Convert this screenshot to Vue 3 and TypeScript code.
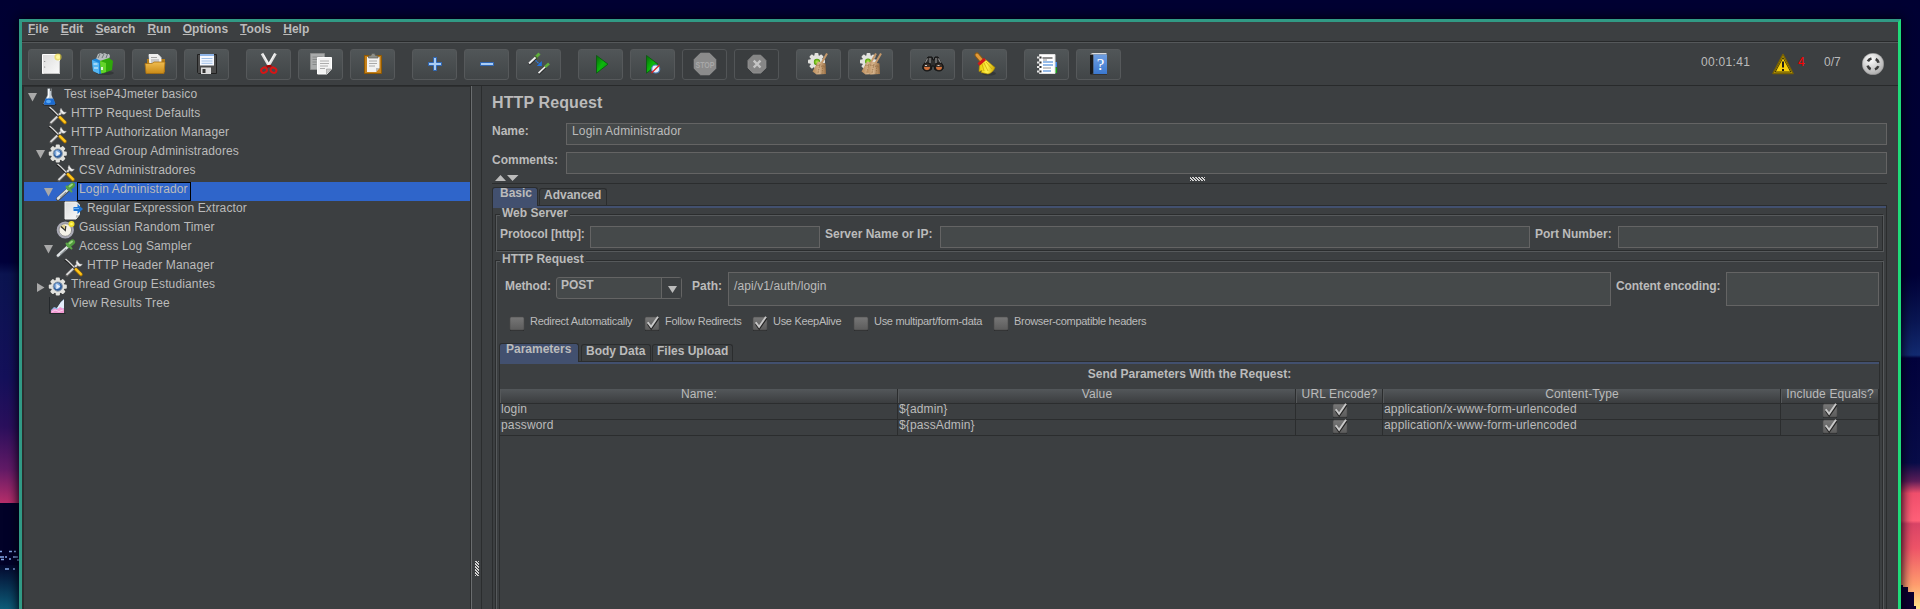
<script setup lang="ts">
interface ToolButton { icon: string; gap?: boolean; disabled?: boolean }
interface TreeNode { label: string; depth: number; icon: string; state?: 'open' | 'closed'; selected?: boolean }
interface Param { name: string; value: string; type: string }

const menus: string[] = ['File', 'Edit', 'Search', 'Run', 'Options', 'Tools', 'Help']

const tools: ToolButton[] = [
  { icon: 'new' }, { icon: 'templates' }, { icon: 'open' }, { icon: 'save' },
  { icon: 'cut', gap: true }, { icon: 'copy' }, { icon: 'paste' },
  { icon: 'plus', gap: true }, { icon: 'minus' }, { icon: 'toggle' },
  { icon: 'play', gap: true }, { icon: 'play-now' }, { icon: 'stop', disabled: true }, { icon: 'shutdown', disabled: true },
  { icon: 'clear', gap: true }, { icon: 'clear-all' },
  { icon: 'search', gap: true }, { icon: 'broom' },
  { icon: 'functions', gap: true }, { icon: 'help' },
]

const tree: TreeNode[] = [
  { label: 'Test iseP4Jmeter basico', depth: 0, icon: 't-flask', state: 'open' },
  { label: 'HTTP Request Defaults', depth: 1, icon: 't-tools' },
  { label: 'HTTP Authorization Manager', depth: 1, icon: 't-tools' },
  { label: 'Thread Group Administradores', depth: 1, icon: 't-gear', state: 'open' },
  { label: 'CSV Administradores', depth: 2, icon: 't-tools' },
  { label: 'Login Administrador', depth: 2, icon: 't-pipette', state: 'open', selected: true },
  { label: 'Regular Expression Extractor', depth: 3, icon: 't-extract' },
  { label: 'Gaussian Random Timer', depth: 2, icon: 't-timer' },
  { label: 'Access Log Sampler', depth: 2, icon: 't-pipette', state: 'open' },
  { label: 'HTTP Header Manager', depth: 3, icon: 't-tools' },
  { label: 'Thread Group Estudiantes', depth: 1, icon: 't-gear', state: 'closed' },
  { label: 'View Results Tree', depth: 1, icon: 't-chart' },
]

const options = [
  { label: 'Redirect Automatically', on: false, cls: 'o1' },
  { label: 'Follow Redirects', on: true, cls: 'o2' },
  { label: 'Use KeepAlive', on: true, cls: 'o3' },
  { label: 'Use multipart/form-data', on: false, cls: 'o4' },
  { label: 'Browser-compatible headers', on: false, cls: 'o5' },
]

const params: Param[] = [
  { name: 'login', value: '${admin}', type: 'application/x-www-form-urlencoded' },
  { name: 'password', value: '${passAdmin}', type: 'application/x-www-form-urlencoded' },
]
</script>

<template>
  <svg class="defs" width="0" height="0" aria-hidden="true">
    <defs>
      <linearGradient id="gPaper" x1="0" y1="0" x2="1" y2="1"><stop offset="0" stop-color="#dcdcdc" /><stop offset="1" stop-color="#fafafa" /></linearGradient>
      <linearGradient id="gFolder" x1="0" y1="0" x2="0" y2="1"><stop offset="0" stop-color="#f0bd50" /><stop offset="1" stop-color="#c98a17" /></linearGradient>
      <linearGradient id="gPlay" x1="0" y1="0" x2="1" y2="1"><stop offset="0" stop-color="#0a6a0a" /><stop offset="0.5" stop-color="#0cb80c" /><stop offset="1" stop-color="#0a8a0a" /></linearGradient>
      <linearGradient id="gBristle" x1="0" y1="0" x2="1" y2="0"><stop offset="0" stop-color="#b98a58" /><stop offset="0.5" stop-color="#d6b48c" /><stop offset="1" stop-color="#9a6f43" /></linearGradient>
      <linearGradient id="gYellow" x1="0" y1="0" x2="1" y2="0"><stop offset="0" stop-color="#e8c800" /><stop offset="0.5" stop-color="#fff04a" /><stop offset="1" stop-color="#c9a400" /></linearGradient>
      <radialGradient id="gBall" cx="0.4" cy="0.3" r="0.8"><stop offset="0" stop-color="#ffffff" /><stop offset="1" stop-color="#a2a2a2" /></radialGradient>
      <radialGradient id="gGreen"><stop offset="0" stop-color="#b6ee4c" /><stop offset="1" stop-color="#4e9a06" /></radialGradient>
      <linearGradient id="gBook" x1="0" y1="0" x2="0" y2="1"><stop offset="0" stop-color="#6f9fe2" /><stop offset="1" stop-color="#3b78cf" /></linearGradient>
      <linearGradient id="gBox" x1="0" y1="0" x2="0" y2="1"><stop offset="0" stop-color="#777" /><stop offset="1" stop-color="#5c5c5c" /></linearGradient>
      <g id="cog">
        <g fill="#e2e2de">
          <rect x="-2" y="-8.5" width="4" height="17" rx="1" /><rect x="-8.5" y="-2" width="17" height="4" rx="1" />
          <rect x="-2" y="-8.5" width="4" height="17" rx="1" transform="rotate(45)" /><rect x="-2" y="-8.5" width="4" height="17" rx="1" transform="rotate(-45)" />
          <circle r="6.5" />
        </g>
      </g>
      <g id="strawbroom">
        <path d="M31 4.5 25 15" stroke="#c4986a" stroke-width="2" />
        <path d="M22 12.5 29.5 14.5 30 25 20.5 25.5 16.5 22.5Z" fill="url(#gBristle)" />
        <path d="M20 16 29 18M24 15 22 24M27 16 26 25" stroke="#8d653b" stroke-width=".7" stroke-dasharray="1.5 1" />
      </g>
    </defs>

    <symbol id="new" viewBox="0 0 45 31">
      <path d="M14.5 5.5h17v19h-17z" fill="url(#gPaper)" stroke="#fff" />
      <path d="M15.5 24.5h16M31.5 12v12" stroke="#aaa" stroke-width=".7" />
      <circle cx="16.7" cy="12.5" r=".6" fill="#777" /><circle cx="16.7" cy="18" r=".6" fill="#777" />
      <circle cx="30" cy="8" r="3.6" fill="#e9d63a" opacity=".65" /><circle cx="30" cy="8" r="2" fill="#fff9a0" />
    </symbol>
    <symbol id="templates" viewBox="0 0 45 31">
      <ellipse cx="25" cy="24" rx="9" ry="2" fill="#2b2e2f" opacity=".6" />
      <path d="M16 10 18 5l3-1 1 1 3-1 1 1 3 0 1 2-2 6-6 3z" fill="#b7bcbe" />
      <path d="M18 9l2-4M22 9l2-4M26 9l1.500-4" stroke="#6f7678" stroke-width="1" />
      <path d="M12 11l4-1.500 7 3.500v10.500l-3 1.500-7-3z" fill="#1d86d8" />
      <path d="M12 11l7 3v11l-6-3z" fill="#54b6f2" /><path d="M13.500 15h4M14 19h4" stroke="#e8f6ff" stroke-width="1.200" />
      <path d="M20 12l9-3 4 3-1 9-9 3.500-2-1z" fill="#2fa80a" />
      <path d="M20 12l6 2v9l-5 1.500z" fill="#63d52a" /><path d="M22 18v3" stroke="#fff" stroke-width="1.600" />
    </symbol>
    <symbol id="open" viewBox="0 0 45 31">
      <path d="M15 10h18v13H15z" fill="#b17b19" />
      <path d="M17 5.500h9l3 3V17H18z" fill="#eee" stroke="#fff" stroke-width=".8" />
      <path d="M19 8.500h6M19 11h8M19 13h8" stroke="#9a9a9a" stroke-width=".9" />
      <path d="M13 14.500h7l2-1.500h11L32 24.500H14z" fill="url(#gFolder)" stroke="#a87012" stroke-width=".8" />
    </symbol>
    <symbol id="save" viewBox="0 0 45 31">
      <path d="M13.500 5.500h19v19h-18l-1-1z" fill="#4b4b4b" stroke="#202020" />
      <path d="M16 5h14v11.500H16z" fill="#f5f8ff" /><path d="M16 5h14v2H16z" fill="#8fb5e8" />
      <path d="M17.500 9.500h11M17.500 12h11M17.500 14.300h11" stroke="#9fbfe6" />
      <path d="M17 18.500h10V25H17z" fill="#dcdcdc" /><path d="M18.500 20h3v4h-3z" fill="#333" />
    </symbol>
    <symbol id="cut" viewBox="0 0 45 31">
      <path d="M16 4.500l7.500 13M29.500 4.500l-7.500 13" stroke="#dedede" stroke-width="2.800" />
      <path d="M17 5l7 12.500M28.500 5l-6 10.500" stroke="#f8f8f8" stroke-width="1" />
      <path d="M20.500 17.500l5-.5" stroke="#a40000" stroke-width="2.500" />
      <ellipse cx="18" cy="21.200" rx="3" ry="2.500" transform="rotate(-30 18 21.200)" fill="none" stroke="#d81515" stroke-width="2" />
      <ellipse cx="27.500" cy="21.200" rx="3" ry="2.500" transform="rotate(30 27.500 21.200)" fill="none" stroke="#d81515" stroke-width="2" />
    </symbol>
    <symbol id="copy" viewBox="0 0 45 31">
      <path d="M12.500 4.500h14v16h-14z" fill="#a9abab" stroke="#8a8c8c" />
      <path d="M14.500 8h10M14.500 10.500h10M14.500 13h4M14.500 15.500h4" stroke="#7d8080" stroke-width=".8" />
      <path d="M19.500 8.500h14V20l-4.500 5h-9.500z" fill="#f4f4f4" stroke="#fff" />
      <path d="M22 12h9M22 14.500h9M22 17h8M22 19.500h5" stroke="#a5a5a5" stroke-width=".9" />
      <path d="M28.500 25v-5h5z" fill="#c9c9c9" stroke="#888" stroke-width=".5" />
    </symbol>
    <symbol id="paste" viewBox="0 0 45 31">
      <path d="M14.500 6.500h17v18h-17z" fill="#c5811c" stroke="#8f5902" />
      <path d="M17 8h12.500v11L26 23h-9z" fill="#f2f2f2" /><path d="M26 23v-4h3.500z" fill="#bbb" />
      <path d="M19 12h8M19 14.500h8M19 17h6" stroke="#a0a0a0" stroke-width=".9" />
      <path d="M18.500 9V7l2.500-.5 1-2h2.500l1 2 2.500.5v2z" fill="#8c8e88" stroke="#5b5d58" stroke-width=".7" />
    </symbol>
    <symbol id="plus" viewBox="0 0 45 31">
      <path d="M21.500 8.500h3v5h5v3h-5v5h-3v-5h-5v-3h5z" fill="#a9cdf5" stroke="#2f67b5" stroke-width="1" />
    </symbol>
    <symbol id="minus" viewBox="0 0 45 31">
      <path d="M16.500 13.500h13v3h-13z" fill="#a9cdf5" stroke="#2f67b5" stroke-width="1" />
    </symbol>
    <symbol id="toggle" viewBox="0 0 45 31">
      <path d="M13 15.500l8-7.500" stroke="#2c2e2f" stroke-width="3" /><path d="M13 14.500l8-7.500" stroke="#f0f0f0" stroke-width="1.900" />
      <path d="M20 8l3.500-3.500" stroke="#5fae3b" stroke-width="3" /><path d="M18.500 6.500l3.500 3.500" stroke="#47682f" stroke-width="1.200" />
      <path d="M22.500 25l7-7" stroke="#2c2e2f" stroke-width="2.800" /><path d="M22.500 24.200l7-6.700" stroke="#f0f0f0" stroke-width="1.600" />
      <path d="M29 18l4-3.500" stroke="#5fae3b" stroke-width="2.600" />
      <path d="M19.500 11.500l4 3.500" stroke="#2b7de0" stroke-width="1.300" stroke-dasharray="1.600 .6" /><path d="M25.800 12v5h-5z" fill="#1f6fe0" />
    </symbol>
    <symbol id="play" viewBox="0 0 45 31">
      <path d="M18.500 6.500l11.500 8.700-11.500 9z" fill="url(#gPlay)" stroke="#0a5c12" stroke-width=".9" />
    </symbol>
    <symbol id="play-now" viewBox="0 0 45 31">
      <path d="M16.500 6.500l11.500 8.700-11.500 9z" fill="url(#gPlay)" stroke="#0a5c12" stroke-width=".9" />
      <circle cx="25.700" cy="20" r="4" fill="#e8f0fa" stroke="#4f86c0" stroke-width="1.200" /><path d="M21.500 24l8-8" stroke="#d81e1e" stroke-width="1.300" />
    </symbol>
    <symbol id="stop" viewBox="0 0 45 31">
      <path d="M18.500 4.200h9l6.300 6.300v9l-6.300 6.300h-9l-6.300-6.300v-9z" fill="#8b8b8b" stroke="#9b9b9b" stroke-width=".8" />
    </symbol>
    <symbol id="shutdown" viewBox="0 0 45 31">
      <path d="M19.200 6.200h7.500l5.200 5.200v7.500l-5.200 5.200h-7.500L14 18.900v-7.500z" fill="#868686" stroke="#959595" stroke-width=".8" />
      <path d="M19.700 11.700l6.800 6.800M26.500 11.700l-6.800 6.800" stroke="#c4c4c4" stroke-width="2.400" />
    </symbol>
    <symbol id="clear" viewBox="0 0 45 31">
      <use href="#cog" transform="translate(20.500 12.500)" /><circle cx="21" cy="13" r="3.200" fill="url(#gGreen)" />
      <use href="#strawbroom" />
    </symbol>
    <symbol id="clear-all" viewBox="0 0 45 31">
      <use href="#cog" transform="translate(20.500 12.500)" /><circle cx="20" cy="12.500" r="3" fill="url(#gGreen)" />
      <use href="#strawbroom" transform="translate(-3 0)" /><use href="#strawbroom" transform="translate(2 0)" />
    </symbol>
    <symbol id="search" viewBox="0 0 45 31">
      <path d="M18 8h4l1 3h1l1-3h3l5 9v3l-8 1-1-4h-2l-1 4-8-1v-3z" fill="#2e2e2e" stroke="#111" />
      <path d="M17.500 9.500l-2.500 5M28.500 9.500l2.500 5M20 9v5M26 9v5" stroke="#8c8c8c" stroke-width="1.200" />
      <circle cx="17" cy="18" r="4" fill="#3a2f28" stroke="#151515" stroke-width="1.200" /><circle cx="29" cy="18" r="4" fill="#3a2f28" stroke="#151515" stroke-width="1.200" />
      <path d="M14 18a3 3 0 006 0zM26 18a3 3 0 006 0z" fill="#d0703a" /><path d="M15 16.500h2M27.500 16.500h2" stroke="#ccc" />
    </symbol>
    <symbol id="broom" viewBox="0 0 45 31">
      <ellipse cx="27" cy="24.500" rx="7" ry="2" fill="#2b2e2f" opacity=".6" />
      <path d="M15 6l5.500 6.500" stroke="#8f5a10" stroke-width="5" stroke-linecap="round" /><path d="M15 6l5.500 6.500" stroke="#e09a3a" stroke-width="3" stroke-linecap="round" />
      <path d="M17.500 15.500l6-5 9.500 8c-1 3-4 6-7 6.500l-7-1.500 1-2-3 1z" fill="url(#gYellow)" stroke="#b08c00" stroke-width=".6" />
      <path d="M20 15l2 7M22 14l4 8M24 13l6 7" stroke="#c8a200" stroke-width=".7" />
      <path d="M16.500 15.500l6.500-5.500" stroke="#d01818" stroke-width="3" />
    </symbol>
    <symbol id="functions" viewBox="0 0 45 31">
      <path d="M30 13h3v5h-3z" fill="#3d84e0" /><path d="M30 18.500h3v5.500h-3z" fill="#18a018" />
      <path d="M15.500 5.500H31v19H15.500z" fill="#fff" stroke="#e0e0e0" />
      <path d="M18.500 9h10" stroke="#444" stroke-width="1.200" /><path d="M19 13h10M19 16h10M19 22h8" stroke="#2e78d2" stroke-width="1.100" /><path d="M19 11h4M19 19h8" stroke="#777" stroke-width=".8" />
      <path d="M13 8.500h4M13 13.500h4M13 18h4M13 22.500h4" stroke="#e6e6e6" stroke-width="1.800" /><path d="M15.500 8.500h2M15.500 13.500h2M15.500 18h2M15.500 22.500h2" stroke="#333" stroke-width="2" />
    </symbol>
    <symbol id="help" viewBox="0 0 45 31">
      <path d="M14 6l3-1.500V24l-1.500 2L14 24.500z" fill="#1a1a1a" /><path d="M14.500 5l2-1h14v1.500h-16z" fill="#ddd" />
      <path d="M17.500 5.500H31V25H17.500z" fill="url(#gBook)" /><path d="M14.500 25.500H31" stroke="#333" stroke-width="1" />
    </symbol>

    <symbol id="t-flask" viewBox="0 0 20 19">
      <ellipse cx="10.500" cy="17.500" rx="7" ry="1.300" fill="#222526" />
      <path d="M8.500 1.500h4V8l3.500 8.500q0 1-1 1h-9.500q-1 0-1-1L8.500 8z" fill="#c8d2da" opacity=".95" />
      <path d="M9.700 2v7L7 14" stroke="#fff" stroke-width="1.200" fill="none" /><path d="M11.700 1v3" stroke="#444" />
      <path d="M6.500 11.500h8l1.800 5q0 1.300-1.300 1.300h-9q-1.300 0-1-1.300z" fill="#1b6bd0" /><ellipse cx="9.500" cy="14.500" rx="2.500" ry="1.800" fill="#58a8f5" />
    </symbol>
    <symbol id="t-tools" viewBox="0 0 20 19">
      <path d="M3 17l11-11" stroke="#555" stroke-width="3.600" stroke-linecap="round" /><path d="M3 16.500L14 6" stroke="#d9d9d9" stroke-width="1.800" stroke-linecap="round" />
      <path d="M13 2q-2.500 3 .5 5.500t5-1.500l-2.500 0-1.500-1.500z" fill="#eee" stroke="#777" stroke-width=".5" />
      <path d="M1 1.500l3 2 7 7" stroke="#1c1c1c" stroke-width="2.400" fill="none" /><path d="M1.500 1l3 2.500 6 6" stroke="#d8d8d8" stroke-width="1.400" fill="none" />
      <path d="M12 11.500l5 5" stroke="#b57c00" stroke-width="3.400" stroke-linecap="round" /><path d="M12 11.300l4.800 4.700" stroke="#ffc61a" stroke-width="2.300" stroke-linecap="round" />
    </symbol>
    <symbol id="t-gear" viewBox="0 0 20 19">
      <use href="#cog" transform="translate(9.800 9.600) scale(1.060)" />
      <circle cx="9.800" cy="9.600" r="4.600" fill="#2d5c9a" stroke="#8a98a8" /><circle cx="9.300" cy="9" r="3" fill="#7fa9dc" /><path d="M8.300 6.800l4 2.700-4 2.700z" fill="#e8f0fb" />
    </symbol>
    <symbol id="t-pipette" viewBox="0 0 20 19">
      <path d="M2 17l11-10" stroke="#4a4e50" stroke-width="4" stroke-linecap="round" /><path d="M2 16.500l10.500-9.500" stroke="#dfe3e5" stroke-width="2.600" stroke-linecap="round" />
      <path d="M4 15.500l6-5.500" stroke="#878f93" stroke-width="1" />
      <path d="M13 6l3.500-3" stroke="#4f9a3d" stroke-width="5.200" stroke-linecap="round" /><path d="M13.500 4.500l2.500-2" stroke="#9cd680" stroke-width="2" stroke-linecap="round" />
      <path d="M10.500 4.500l5 5" stroke="#5ba548" stroke-width="2" stroke-linecap="round" />
    </symbol>
    <symbol id="t-extract" viewBox="0 0 20 19">
      <path d="M1 1h11.500l3 3v9.500L12 18H1z" fill="url(#gPaper)" stroke="#f5f5f5" /><path d="M10.500 18.300q2-1 1.500-4 3 .3 4-.8z" fill="#b9b9b9" />
      <path d="M9.500 6h4V3l5.500 5-5.500 5v-3h-4z" fill="#1d74d6" /><path d="M10 7.500h5" stroke="#6bb0f5" />
    </symbol>
    <symbol id="t-timer" viewBox="0 0 20 19">
      <circle cx="9.300" cy="10" r="7.600" fill="#f5f2e8" stroke="#a9a9b5" stroke-width="2" /><circle cx="9.300" cy="10" r="6.300" fill="none" stroke="#65656d" stroke-width=".7" />
      <path d="M9.300 10V4.500a5.500 5.500 0 00-5 3z" fill="#e3d490" /><path d="M5 6.500l4.300 4 .5-4.500" stroke="#333" stroke-width="1.200" fill="none" />
      <circle cx="15.500" cy="4" r="3" fill="#f0df2a" /><circle cx="15.500" cy="4" r="1.300" fill="#fff86a" />
    </symbol>
    <symbol id="t-chart" viewBox="0 0 20 19">
      <path d="M1.500 1v16.500h16" stroke="#24282b" fill="none" />
      <path d="M3 14l3-3 3 1 4-6 3-3v14H3z" fill="#8fb6e4" /><path d="M9 12l4-6 3-2.500V12l-4 2z" fill="#e5eefb" />
      <path d="M3 15l3-2.500 3 1 3-2.500 4 2v4H3z" fill="#f29ad3" /><path d="M4 16l3-2 4 1.500 4-1.500" stroke="#fbd3ee" fill="none" />
    </symbol>
    <symbol id="check-off" viewBox="0 0 16 16">
      <path d="M1 14.500h14" stroke="#2b2d2e" /><rect x="1" y="1" width="14" height="13" rx="1.500" fill="url(#gBox)" stroke="#4c4c4c" stroke-width=".6" />
    </symbol>
    <symbol id="check-on" viewBox="0 0 16 16">
      <path d="M1 14.500h14" stroke="#2b2d2e" /><rect x="1" y="1" width="14" height="13" rx="1.500" fill="url(#gBox)" stroke="#4c4c4c" stroke-width=".6" />
      <path d="M4 7.800l3.200 4.500L14.500 2" stroke="#232323" stroke-width="2.200" fill="none" /><path d="M3.700 6.300l3.400 4.500L14 .8" stroke="#c8c8c8" stroke-width="1.900" fill="none" />
    </symbol>
  </svg>

  <div class="desktop">
    <svg class="wall" viewBox="0 0 19 609" preserveAspectRatio="none">
      <defs>
        <linearGradient id="skyL" x1="0" y1="0" x2="0" y2="1">
          <stop offset="0" stop-color="#000032" /><stop offset=".43" stop-color="#00003a" /><stop offset=".45" stop-color="#0b1450" />
          <stop offset=".62" stop-color="#14105a" /><stop offset=".7" stop-color="#2a0f5c" /><stop offset=".77" stop-color="#611a66" /><stop offset=".825" stop-color="#b52e6a" />
        </linearGradient>
        <linearGradient id="sea" x1="0" y1="0" x2="0" y2="1"><stop offset="0" stop-color="#03082e" /><stop offset="1" stop-color="#0d5c78" /></linearGradient>
      </defs>
      <rect width="19" height="609" fill="url(#skyL)" /><rect y="503" width="19" height="106" fill="#020228" /><rect y="565" width="19" height="44" fill="url(#sea)" />
      <path d="M0 551.500h2M9 551.500h3M14 551.500h2M0 557h4M5 557h2M13 557h5M1 559.500h3M9 559h2M17 560h2M5 569h4M13 569h2" stroke="#87a9e8" stroke-width="1.500" />
    </svg>
    <main class="window">
      <nav class="menubar">
        <span v-for="m in menus" :key="m" class="menu"><u>{{ m[0] }}</u>{{ m.slice(1) }}</span>
      </nav>
      <header class="toolbar">
        <button v-for="t in tools" :key="t.icon" class="tool" :class="{ gap: t.gap, off: t.disabled }">
          <svg width="45" height="31">
            <use :href="'#' + t.icon" />
            <text v-if="t.icon === 'stop'" class="stop-text" x="23" y="18.800" textLength="19" lengthAdjust="spacingAndGlyphs">STOP</text>
            <text v-if="t.icon === 'help'" class="help-text" x="24.500" y="21">?</text>
          </svg>
        </button>
        <div class="status">
          <span class="clock">00:01:41</span>
          <svg class="warn" width="22" height="22" viewBox="0 0 22 22">
            <path d="M11 1.500L21 20.500H1z" fill="#f8d10a" stroke="#7a6200" stroke-width="1.600" stroke-linejoin="round" />
            <path d="M11 4.500L18.800 19H3.200z" fill="#f8d10a" stroke="#30290a" stroke-width=".9" />
            <path d="M11 8.500v6M11 16v2" stroke="#1b1b1b" stroke-width="2" />
          </svg>
          <span class="errors">4</span>
          <span class="threads">0/7</span>
          <svg class="ball" width="22" height="22" viewBox="0 0 22 22">
            <circle cx="11" cy="11" r="10.800" fill="url(#gBall)" stroke="#8e8e8e" stroke-width=".5" />
            <circle cx="11" cy="11" r="5.700" fill="none" stroke="#3b3b3b" stroke-width="2.600" stroke-dasharray="4.500 4.450" stroke-dashoffset="-2.200" />
          </svg>
        </div>
      </header>

      <div class="split">
        <aside class="tree">
          <div v-for="n in tree" :key="n.label" class="node" :class="['d' + n.depth, { selected: n.selected }]">
            <span class="handle">
              <svg v-if="n.state === 'open'" width="9" height="9"><path d="M0 0h9L4.500 8.500z" fill="#a9a9a9" /></svg>
              <svg v-else-if="n.state === 'closed'" width="9" height="9"><path d="M1 0v9l7.500-4.500z" fill="#a9a9a9" /></svg>
            </span>
            <svg class="nicon" width="20" height="19"><use :href="'#' + n.icon" /></svg>
            <span class="nlabel">{{ n.label }}</span>
          </div>
        </aside>
        <div class="divider"><i class="grip tall"></i></div>

        <section class="editor">
          <h1>HTTP Request</h1>
          <div class="row"><label>Name:</label><div class="field">Login Administrador</div></div>
          <div class="row second"><label>Comments:</label><div class="field"></div></div>
          <div class="fold">
            <svg width="24" height="6"><path d="M0 6L5.500 0 11 6zM12 0h11.500L17.500 6z" fill="#bbb" /></svg>
            <i class="grip wide"></i>
          </div>
          <div class="tabs outer"><span class="tab active basic">Basic</span><span class="tab adv">Advanced</span></div>
          <div class="pane">
            <section class="group server">
              <h2>Web Server</h2>
              <div class="line">
                <label class="l-proto">Protocol [http]:</label><div class="field f-proto"></div>
                <label class="l-server">Server Name or IP:</label><div class="field f-server"></div>
                <label class="l-port">Port Number:</label><div class="field f-port"></div>
              </div>
            </section>
            <section class="group request">
              <h2>HTTP Request</h2>
              <div class="line">
                <label class="l-method">Method:</label>
                <div class="combo"><span>POST</span><b><svg width="9" height="7"><path d="M0 0h9L4.500 7z" fill="#bbb" /></svg></b></div>
                <label class="l-path">Path:</label><div class="field f-path">/api/v1/auth/login</div>
                <label class="l-enc">Content encoding:</label><div class="field f-enc"></div>
              </div>
              <div class="options">
                <span v-for="o in options" :key="o.label" class="opt" :class="o.cls">
                  <svg width="16" height="16"><use :href="o.on ? '#check-on' : '#check-off'" /></svg>{{ o.label }}
                </span>
              </div>
              <div class="tabs inner"><span class="tab active params">Parameters</span><span class="tab body">Body Data</span><span class="tab files">Files Upload</span></div>
              <div class="pane grid-pane">
                <p class="caption">Send Parameters With the Request:</p>
                <div class="trow thead"><span>Name:</span><span>Value</span><span>URL Encode?</span><span>Content-Type</span><span>Include Equals?</span></div>
                <div v-for="p in params" :key="p.name" class="trow">
                  <span>{{ p.name }}</span><span>{{ p.value }}</span>
                  <span class="mid"><svg width="16" height="16"><use href="#check-on" /></svg></span>
                  <span>{{ p.type }}</span>
                  <span class="mid"><svg width="16" height="16"><use href="#check-on" /></svg></span>
                </div>
              </div>
            </section>
          </div>
        </section>
      </div>
    </main>
    <svg class="wall" viewBox="0 0 19 609" preserveAspectRatio="none">
      <defs>
        <linearGradient id="skyR" x1="0" y1="0" x2="0" y2="1">
          <stop offset="0" stop-color="#000032" /><stop offset=".45" stop-color="#000036" /><stop offset=".53" stop-color="#0a1754" /><stop offset=".583" stop-color="#122a70" />
          <stop offset=".588" stop-color="#02023c" /><stop offset=".76" stop-color="#080c48" /><stop offset=".79" stop-color="#5c1d58" /><stop offset=".81" stop-color="#f04f6c" />
          <stop offset=".855" stop-color="#ff6078" /><stop offset=".86" stop-color="#d94466" /><stop offset=".9" stop-color="#ee5468" /><stop offset=".96" stop-color="#ff9c6e" /><stop offset="1" stop-color="#ffe48a" />
        </linearGradient>
      </defs>
      <rect width="19" height="609" fill="url(#skyR)" /><path d="M0 585h2v2h5v5h6v14h2v3H0z" fill="#0c0030" />
    </svg>
  </div>
</template>

<style>
html, body { margin: 0; overflow: hidden; background: #000032; }
</style>

<style scoped>
.defs { position: absolute; }
.desktop { display: grid; grid-template-columns: 19px 1882px 19px; width: 1920px; height: 609px; overflow: hidden; background: #000032; font: 12px/14px "Liberation Sans", Arial, sans-serif; color: #bbb; }
.desktop * { box-sizing: border-box; }
.wall { display: block; width: 19px; height: 609px; }
.window { position: relative; z-index: 1; margin-top: 19px; height: 600px; border: 3px solid #319a85; border-right-color: #1fdb7a; background: #3c3f41; box-shadow: 0 0 10px 1px #00000e; }
.menubar { display: flex; height: 21px; padding: 0 6px; border-bottom: 1px solid #55585a; box-shadow: inset 0 -1px #282a2b; font-weight: bold; }
.menu { margin-right: 12px; }
.menu u { text-underline-offset: 1px; text-decoration-thickness: 1px; }
.toolbar { display: flex; height: 43px; padding: 6px 6px 0; border-bottom: 1px solid #282a2b; }
.tool { width: 45px; height: 31px; margin: 0 7px 0 0; padding: 0; border: 1px solid #56595b; border-radius: 3px; background: linear-gradient(#515658, #414547); }
.tool svg { display: block; margin: -1px; }
.stop-text { font: bold 9.5px "Liberation Sans", Arial, sans-serif; text-anchor: middle; fill: #a8a8a8; }
.help-text { font: 17px "Liberation Serif", serif; text-anchor: middle; fill: #fff; }
.tool.gap { margin-left: 10px; }
.tool.off { background: #3a3d3f; border-color: #525557; }
.status { display: flex; margin-left: auto; padding-right: 8px; }
.status span { padding-top: 6px; }
.clock { width: 71px; letter-spacing: .3px; }
.warn { margin-top: 4px; }
.errors { width: 30px; padding-left: 4px; color: #f00; }
.threads { width: 38px; }
.ball { margin-top: 4px; }

.split { display: flex; height: 524px; }
.tree { width: 450px; padding: 1px 0 0; border-left: 2px solid #2b2d2e; border-right: 1px solid #6a6d6f; box-shadow: inset -1px 0 #2b2d2e, inset 0 1px #2e3031; }
.node { display: flex; height: 19px; margin-right: 1px; padding-left: 4px; letter-spacing: .14px; }
.d1 { padding-left: 12px; }
.d2 { padding-left: 20px; }
.d3 { padding-left: 28px; }
.handle { width: 12px; padding-top: 6px; line-height: 0; }
.nicon { flex: none; margin-right: 1px; }
.d0 .nicon { margin-right: 2px; }
.d0 .handle { width: 11px; }
.d0 .nlabel { margin-left: 1px; }
.nlabel { height: 19px; padding: 0 1px; border: 1px solid transparent; border-top-width: 0; white-space: nowrap; }
.selected { background: #2f65ca; }
.selected .nlabel { box-shadow: inset 0 1px #000; border-color: #000; padding-right: 2px; }
.divider { display: flex; align-items: flex-start; justify-content: center; width: 9px; }
.grip { display: block; background: repeating-linear-gradient(45deg, #d0d0d0 0 1.100px, #303234 1.100px 2.120px); }
.grip.tall { width: 4px; height: 15px; margin-top: 475px; }
.grip.wide { width: 15px; height: 4px; margin: 2px 0 0 671px; }

.editor { flex: 1; padding: 8px 11px 0 10px; border-left: 1px solid #2b2d2e; overflow: hidden; }
h1 { margin: 0; font: bold 16px/18px "Liberation Sans", Arial, sans-serif; letter-spacing: .12px; }
.row { display: grid; grid-template-columns: 74px 1fr; height: 22px; margin-top: 11px; }
.row.second { margin-top: 7px; }
label { padding-top: 1px; font-weight: bold; white-space: nowrap; }
.field { padding: 0 5px; border: 1px solid #646464; background: #45494a; letter-spacing: .18px; }
.fold { display: flex; height: 10px; padding: 1px 0 0 3px; border-bottom: 1px solid #2b2d2e; }
.tabs { display: flex; align-items: flex-end; height: 21px; font-weight: bold; }
.tab { height: 17px; margin-left: 2px; border: 1px solid #2b2d2e; border-bottom: 0; border-radius: 3px 3px 0 0; padding: 0 4px; line-height: 12px; white-space: nowrap; }
.tab.active { position: relative; height: 19px; margin: 0 0 -1px; padding: 0 6px; border-bottom: 0; background: #42506f; line-height: 10px; }
.basic { width: 46px; }
.tab.basic { padding-left: 7px; }
.adv { width: 68px; margin-left: 1px; }
.pane { border: 1px solid #2b2d2e; border-bottom: 0; }
.pane::before { content: ""; display: block; height: 2px; background: #42506f; }
.group { position: relative; margin: 0 2px; }
.group::before, .group::after { content: ""; position: absolute; inset: 0 1px 1px 0; border: 1px solid #2b2d2e; pointer-events: none; }
.group::after { inset: 1px 0 0 1px; border-color: #56595b; }
h2 { position: absolute; z-index: 1; left: 5px; top: -8px; margin: 0; padding: 0 2px; background: #3c3f41; font: bold 12px/14px "Liberation Sans", Arial, sans-serif; }
.server h2 { top: -6px; line-height: 10px; }
.server { height: 38px; margin-top: 6px; padding: 12px 5px 0; }
.server .line { display: flex; height: 22px; }
.l-proto { width: 90px; letter-spacing: -.12px; }
.f-proto { width: 230px; }
.l-server { width: 120px; padding-left: 5px; }
.f-server { width: 590px; }
.l-port { width: 88px; padding-left: 5px; }
.f-port { width: 260px; }
.request { height: 400px; margin-top: 8px; padding: 12px 4px 0; }
.request .line { display: flex; height: 34px; }
.request .line > label { padding-top: 7px; }
.l-method { width: 57px; padding-left: 6px; letter-spacing: -.1px; }
.combo { display: flex; width: 126px; height: 22px; margin-top: 5px; border: 1px solid #646464; border-radius: 3px; background: #45494a; font-weight: bold; }
.combo span { width: 104px; padding-left: 4px; }
.combo b { flex: 1; padding: 8px 0 0 6px; border-left: 1px solid #646464; background: #3c3f41; line-height: 0; }
.l-path { width: 46px; padding-left: 10px; }
.f-path { width: 883px; padding-top: 6px; letter-spacing: .1px; }
.l-enc { width: 115px; padding-left: 5px; letter-spacing: -.1px; }
.f-enc { width: 153px; }
.options { display: flex; height: 34px; padding: 8px 0 0 10px; font-size: 11px; line-height: 14px; letter-spacing: -.3px; }
.opt { display: flex; flex: none; width: 135px; white-space: nowrap; }
.opt svg { flex: none; margin: 2px 5px 0 0; }
.o2 { width: 108px; }
.o3 { width: 101px; }
.o4 { width: 140px; }
.o5 { width: 160px; }
.params { width: 80px; }
.body { width: 70px; margin-left: 2px; }
.files { width: 81px; margin-left: 1px; }
.grid-pane { height: 260px; }
.caption { height: 25px; margin: 0; padding-top: 3px; text-align: center; font-weight: bold; }
.trow { display: grid; grid-template-columns: 398px 398px 87px 398px 98px; height: 16px; letter-spacing: .14px; }
.trow span { padding-left: 1px; border-right: 1px solid #2b2d2e; border-bottom: 1px solid #2b2d2e; line-height: 10px; }
.thead { height: 15px; background: linear-gradient(#53575a, #393b3d); text-align: center; }
.thead span { box-shadow: inset 1px 0 #55585a; }
.mid { display: flex; justify-content: center; }
.mid svg { flex: none; margin-top: -1px; }
</style>
